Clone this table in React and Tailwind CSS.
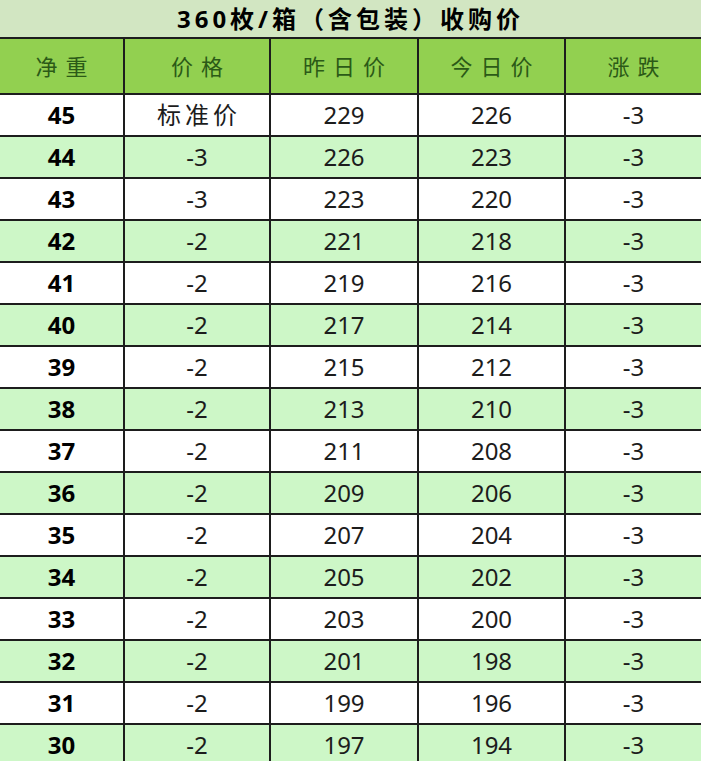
const rows = [
  ["45", "标准价", "229", "226", "-3"],
  ["44", "-3", "226", "223", "-3"],
  ["43", "-3", "223", "220", "-3"],
  ["42", "-2", "221", "218", "-3"],
  ["41", "-2", "219", "216", "-3"],
  ["40", "-2", "217", "214", "-3"],
  ["39", "-2", "215", "212", "-3"],
  ["38", "-2", "213", "210", "-3"],
  ["37", "-2", "211", "208", "-3"],
  ["36", "-2", "209", "206", "-3"],
  ["35", "-2", "207", "204", "-3"],
  ["34", "-2", "205", "202", "-3"],
  ["33", "-2", "203", "200", "-3"],
  ["32", "-2", "201", "198", "-3"],
  ["31", "-2", "199", "196", "-3"],
  ["30", "-2", "197", "194", "-3"],
];

const headers = ["净重", "价格", "昨日价", "今日价", "涨跌"];

const grid = "grid grid-cols-[123px_146px_148px_147px_1fr]";

export default function App() {
  return (
    <div
      className="w-[701px] h-[761px] overflow-hidden bg-white text-[#1c1c1c]"
      style={{ fontFamily: '"Noto Sans", "Noto Sans CJK SC", sans-serif' }}
    >
      <div className="h-[37px] bg-[#d2e6c2] flex items-center justify-center text-[24px] font-bold tracking-[4px] text-black">
        360枚/箱（含包装）收购价
      </div>

      <div className={`${grid} h-[58px] bg-[#92d050] border-y-2 border-[#1d1d1d]`}>
        {headers.map((h, i) => (
          <div
            key={h}
            className={`flex items-center justify-center text-[22px] tracking-[8px] pl-[8px] text-[#2b5a17] ${i > 0 ? "border-l-2 border-[#1d1d1d]" : ""}`}
          >
            {h}
          </div>
        ))}
      </div>

      {rows.map((r, ri) => (
        <div
          key={r[0]}
          className={`${grid} h-[42px] border-b-2 border-[#1d1d1d] ${ri % 2 === 1 ? "bg-[#cdf7c7]" : "bg-white"}`}
        >
          {r.map((c, ci) => (
            <div
              key={ci}
              className={`flex items-center justify-center text-[24px] ${ci === 0 ? "font-bold text-black" : ""} ${c === "标准价" ? "tracking-[4px] pl-[4px]" : ""} ${ci > 0 ? "border-l-2 border-[#1d1d1d]" : ""}`}
            >
              {c}
            </div>
          ))}
        </div>
      ))}
    </div>
  );
}
